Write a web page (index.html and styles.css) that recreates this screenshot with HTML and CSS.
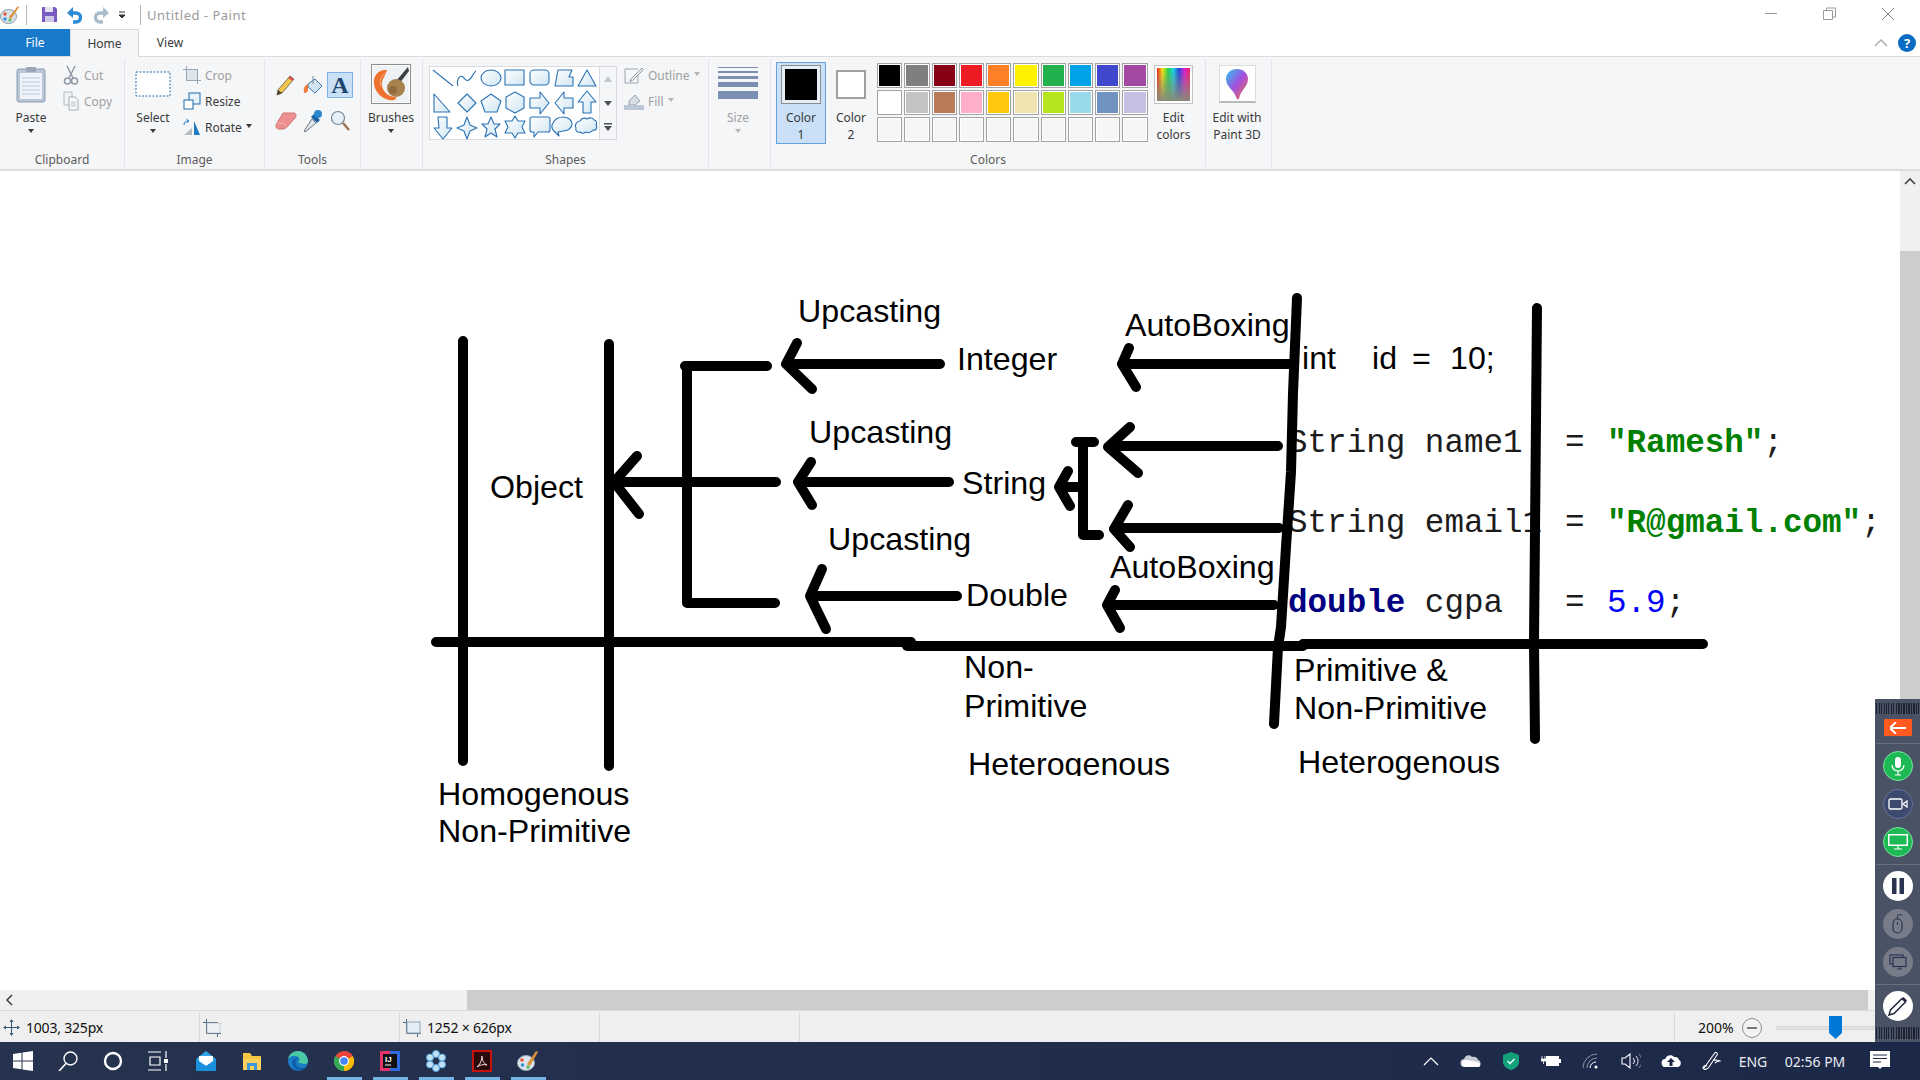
FILE: index.html
```html
<!DOCTYPE html>
<html lang="en">
<head>
    <meta charset="UTF-8">
    <title>Untitled - Paint</title>
    <link rel="stylesheet" href="styles.css">
</head>
<body>
    <!-- title bar -->
    <div class="titlebar">
        <svg class="qa app-icon" width="20" height="20" viewBox="0 0 20 20"><ellipse cx="8.5" cy="11.5" rx="8" ry="7" fill="#d8e3ea" stroke="#8499a8"/><circle cx="5" cy="9" r="1.7" fill="#e8503a"/><circle cx="5" cy="14" r="1.7" fill="#3f8ed8"/><circle cx="10" cy="15" r="1.6" fill="#5cb85c"/><path d="M9 12L18 1l1 1-8 12z" fill="#d9913a"/></svg>
        <span class="qa-sep first"></span>
        <svg class="qa save" width="17" height="17" viewBox="0 0 17 17"><path d="M1 1h13l2 2v13H1z" fill="#7a5cc0"/><path d="M4 1h8v5H4z" fill="#e6e2f2"/><path d="M4 10h9v6H4z" fill="#cfc8e6"/></svg>
        <svg class="qa undo" width="17" height="18" viewBox="0 0 17 18"><path d="M3 7h7a4 4 0 0 1 0 9H7" fill="none" stroke="#2a8ad4" stroke-width="3.4"/><path d="M7 1L1 7l6 5z" fill="#2a8ad4"/></svg>
        <svg class="qa redo" width="17" height="18" viewBox="0 0 17 18"><path d="M14 7H7a4 4 0 0 0 0 9h3" fill="none" stroke="#a9bccb" stroke-width="3.4"/><path d="M10 1l6 6-6 5z" fill="#a9bccb"/></svg>
        <svg class="qa drop" width="8" height="8" viewBox="0 0 8 8"><path d="M1 1h6M1 4h6L4 7z" stroke="#333" fill="#333"/></svg>
        <span class="qa-sep second"></span>
        <span class="doc-title">Untitled - Paint</span>
        <div class="win-controls">
            <svg width="58" height="29" viewBox="0 0 58 29"><path d="M22 13.500h12" stroke="#9a9a9a"/></svg>
            <svg width="58" height="29" viewBox="0 0 58 29"><path d="M22.500 10.500h9v9h-9zM25.500 10.500v-2.500h9v9h-3" fill="none" stroke="#9a9a9a"/></svg>
            <svg width="58" height="29" viewBox="0 0 58 29"><path d="M23 8l12 12M35 8L23 20" stroke="#8a8a8a"/></svg>
        </div>
    </div>

    <!-- tabs -->
    <div class="tabs">
        <div class="tab file-tab">File</div>
        <div class="tab home-tab">Home</div>
        <div class="tab view-tab">View</div>
        <div class="tab-right">
            <svg width="14" height="9" viewBox="0 0 14 9"><path d="M1 8l6-6 6 6" fill="none" stroke="#a8a8a8" stroke-width="1.300"/></svg>
            <span class="help">?</span>
        </div>
    </div>

    <!-- ribbon -->
    <div class="ribbon">
        <div class="group g-clipboard">
            <div class="group-body">
                <div class="big-btn paste">
                    <div class="big-icon">
                        <svg width="30" height="37" viewBox="0 0 30 37"><rect x="1" y="3" width="28" height="33" rx="2" fill="#b9c6d6" stroke="#8d9db0"/><rect x="4" y="7" width="22" height="26" fill="#f0f4fa"/><path d="M6 12h18M6 16h18M6 20h18M6 24h18M6 28h18" stroke="#b5c6dc"/><rect x="10" y="1" width="10" height="5" rx="1" fill="#98a6b7"/></svg>
                    </div>
                    <span class="big-label">Paste</span>
                    <i class="caret"></i>
                </div>
                <div class="small-col clip-col">
                    <div class="small-btn off">
                        <svg width="16" height="20" viewBox="0 0 16 20"><path d="M4 1l6 12M12 1L6 13" stroke="#8f9aa6" stroke-width="1.500"/><circle cx="4.500" cy="16" r="3" fill="none" stroke="#8f9aa6" stroke-width="1.500"/><circle cx="11.500" cy="16" r="3" fill="none" stroke="#8f9aa6" stroke-width="1.500"/></svg>
                        <span>Cut</span>
                    </div>
                    <div class="small-btn off">
                        <svg width="16" height="20" viewBox="0 0 16 20"><path d="M1 1h8v13H1z" fill="#f2f3f5" stroke="#b3bac2"/><path d="M6 6h6l3 3v10H6z" fill="#f7f8f9" stroke="#a6adb6"/><path d="M8 11h5M8 13h5M8 15h5" stroke="#bcc3cb"/></svg>
                        <span>Copy</span>
                    </div>
                </div>
            </div>
            <div class="group-label">Clipboard</div>
        </div>

        <div class="group g-image">
            <div class="group-body">
                <div class="big-btn select">
                    <div class="big-icon">
                        <svg width="36" height="26" viewBox="0 0 36 26"><rect x="1" y="1" width="34" height="24" fill="#fff" stroke="#2e6da8" stroke-dasharray="2 1.500"/></svg>
                    </div>
                    <span class="big-label">Select</span>
                    <i class="caret"></i>
                </div>
                <div class="small-col image-col">
                    <div class="small-btn off">
                        <svg width="18" height="18" viewBox="0 0 18 18"><path d="M3.500 0v14.500H18M0 3.500h14.500V18" fill="none" stroke="#9aa6b4"/><path d="M3.500 14.500l11-11" stroke="#9aa6b4"/><rect x="4" y="4" width="10" height="10" fill="#dfe5ec"/></svg>
                        <span>Crop</span>
                    </div>
                    <div class="small-btn">
                        <svg width="18" height="18" viewBox="0 0 18 18"><rect x="6" y="1" width="11" height="11" fill="#e8f2fa" stroke="#1f6aa8"/><rect x="1" y="8" width="9" height="9" fill="#fff" stroke="#1f6aa8"/></svg>
                        <span>Resize</span>
                    </div>
                    <div class="small-btn">
                        <svg width="18" height="18" viewBox="0 0 18 18"><path d="M1 17L9 10v7z" fill="#b9bdc2"/><path d="M11 3l6 14h-6z" fill="#1f78c1"/><path d="M1 7c0-3 2-4 4-4M3.500 1L6 3 3.500 5" fill="none" stroke="#1f78c1"/></svg>
                        <span>Rotate</span><i class="caret inline"></i>
                    </div>
                </div>
            </div>
            <div class="group-label">Image</div>
        </div>

        <div class="group g-tools">
            <div class="group-body">
                <div class="tool-grid">
                    <div class="tool"><svg width="20" height="22" viewBox="0 0 20 22"><path d="M14 2l4 3L6 19l-5 2 1-5z" fill="#f3c64c" stroke="#5c5340" stroke-width=".8"/><path d="M14 2l4 3-2 2-4-3z" fill="#d85a5a"/><path d="M1 21l1-5 4 3z" fill="#4a4238"/></svg></div>
                    <div class="tool"><svg width="22" height="22" viewBox="0 0 22 22"><path d="M6 10l7-5 7 7-7 7-7-6z" fill="#d3e4f3" stroke="#3f77ac"/><path d="M6 10c-3 1-5 4-4 9 2 0 4-1 4-3z" fill="#f07a3a"/><path d="M11 2v8" stroke="#7d8a96"/></svg></div>
                    <div class="tool active"><span class="tool-a">A</span></div>
                    <div class="tool"><svg width="22" height="18" viewBox="0 0 22 18"><path d="M8 1h11c2 0 3 3 1 5l-8 9c-2 2-3 2-5 2H4c-3 0-4-3-2-6z" fill="#ee8f8f" stroke="#cf7676"/><path d="M2 11l6 0 4 4" fill="none" stroke="#f6b5b5"/></svg></div>
                    <div class="tool"><svg width="22" height="24" viewBox="0 0 22 24"><path d="M10 10L2 22l1 1 11-9z" fill="#dfe7ee" stroke="#6b7680"/><path d="M9 8l6 6 3-3-6-6z" fill="#17609f"/><circle cx="16" cy="5" r="4" fill="#2a86cf"/></svg></div>
                    <div class="tool"><svg width="20" height="22" viewBox="0 0 20 22"><circle cx="8" cy="8" r="6.500" fill="#e6f1fa" stroke="#7a8794" stroke-width="1.200"/><path d="M13 13l6 7" stroke="#9a7350" stroke-width="2.400"/></svg></div>
                </div>
            </div>
            <div class="group-label">Tools</div>
        </div>

        <div class="group g-brushes">
            <div class="group-body">
                <div class="big-btn brushes">
                    <div class="big-icon">
                        <svg width="40" height="40" viewBox="0 0 40 40"><rect x=".5" y=".5" width="39" height="39" fill="#fff" stroke="#8d8d8d"/><rect x="2" y="2" width="36" height="36" fill="#eef2f4"/><path d="M37 3L25 17l3 3L38 7z" fill="#3c3f44"/><path d="M16 6C8 5 2 11 3 20c1 8 7 14 15 16 5 1 8-1 7-3-5 0-10-2-13-8-2-5-1-9 1-12 1-2 2-4 3-7z" fill="#f0712b"/><path d="M14 9c-4 3-6 8-4 13" fill="none" stroke="#f9b48a"/><circle cx="25" cy="24" r="9" fill="#a8814f"/><circle cx="22" cy="26" r="4" fill="#8f6a3c"/></svg>
                    </div>
                    <span class="big-label">Brushes</span>
                    <i class="caret"></i>
                </div>
            </div>
        </div>

        <div class="group g-shapes">
            <div class="group-body">
                <div class="gallery">
                    <svg width="170" height="73" viewBox="0 0 170 73">
                        <defs><linearGradient id="sg" x1="0" y1="0" x2="1" y2="1"><stop offset="0" stop-color="#ffffff"/><stop offset="1" stop-color="#cfe5f2"/></linearGradient></defs>
                        <g fill="url(#sg)" stroke="#2a72b5" stroke-width="1.100" stroke-linejoin="round">
                            <path d="M3 3l20 16" fill="none"/>
                            <path d="M28 19c-2-6 2-12 5-9s4 5 7 2 4-7 6-8" fill="none"/>
                            <ellipse cx="61" cy="11" rx="10" ry="8"/>
                            <rect x="75" y="3" width="19" height="15"/>
                            <rect x="100" y="3" width="19" height="15" rx="4"/>
                            <path d="M128 3h14l-3 7h4l0 9h-18z"/>
                            <path d="M157 3l9 16h-18z"/>
                            <path d="M4 27l16 18H4z"/>
                            <path d="M37 27l9 9-9 9-9-9z"/>
                            <path d="M61 27l10 7-4 11H55l-4-11z"/>
                            <path d="M85 25l9 5v11l-9 5-9-5V30z"/>
                            <path d="M100 31h10v-6l9 11-9 11v-6h-10z"/>
                            <path d="M143 31h-9v-6l-9 11 9 11v-6h9z"/>
                            <path d="M157 24l9 11h-5v11h-8V35h-5z"/>
                            <path d="M8 50h9v11h5l-9 11-9-11h5z"/>
                            <path d="M37 50l3 8 7 3-7 3-3 8-3-8-7-3 7-3z"/>
                            <path d="M61 50l3 7h6l-5 5 2 8-6-4-6 4 2-8-5-5h6z"/>
                            <path d="M85 49l3 5h7l-3 6 3 6h-7l-3 5-3-5h-7l3-6-3-6h7z"/>
                            <path d="M102 50h16a2 2 0 0 1 2 2v11a2 2 0 0 1-2 2h-10l-4 5v-5h-2a2 2 0 0 1-2-2V52a2 2 0 0 1 2-2z"/>
                            <path d="M133 50c5 0 9 3 9 7s-4 7-9 7l-5 1 1 4-5-5c-2-2-3-5-1-8 2-4 6-6 10-6z"/>
                            <path d="M150 54c2-4 6-3 7-2 3-2 6-1 7 1 3 0 3 4 2 5 2 2 0 6-3 5-2 3-5 3-7 2-3 2-5 1-6 0-3 1-5-2-4-4-2-3 1-7 4-7z"/>
                        </g>
                    </svg>
                </div>
                <div class="gallery-scroll">
                    <div class="gs-btn"><svg width="8" height="6" viewBox="0 0 8 6"><path d="M4 0l4 6H0z" fill="#c2c6cb"/></svg></div>
                    <div class="gs-btn"><svg width="8" height="5" viewBox="0 0 8 5"><path d="M0 0h8L4 5z" fill="#4f5359"/></svg></div>
                    <div class="gs-btn"><svg width="8" height="8" viewBox="0 0 8 8"><path d="M0 0h8v1.500H0zM0 3h8L4 8z" fill="#4f5359"/></svg></div>
                </div>
                <div class="small-col outline-col">
                    <div class="small-btn off">
                        <svg width="20" height="18" viewBox="0 0 20 18"><path d="M1 3h13M1 3v14h13V8" fill="none" stroke="#9aa6b4"/><path d="M7 13l11-11 1.500 1.500-11 11-2.500 1z" fill="#eef1f4" stroke="#8f98a3"/></svg>
                        <span>Outline</span><i class="caret inline light"></i>
                    </div>
                    <div class="small-btn off">
                        <svg width="20" height="18" viewBox="0 0 20 18"><path d="M5 9l6-6 5 6-5 4H5z" fill="#d7dde4" stroke="#98a2ae"/><rect x="0" y="13" width="20" height="5" fill="#bcc7d6"/></svg>
                        <span>Fill</span><i class="caret inline light"></i>
                    </div>
                </div>
            </div>
            <div class="group-label">Shapes</div>
        </div>

        <div class="group g-size">
            <div class="group-body">
                <div class="big-btn size">
                    <div class="big-icon size-icon">
                        <i class="size-line s1"></i><i class="size-line s2"></i><i class="size-line s3"></i><i class="size-line s4"></i><i class="size-line s5"></i>
                    </div>
                    <span class="big-label off-text">Size</span>
                    <i class="caret light"></i>
                </div>
            </div>
        </div>

        <div class="group g-colors">
            <div class="group-body">
                <div class="color-btn active">
                    <div class="swatch-big"><i></i></div>
                    <span class="big-label">Color<br>1</span>
                </div>
                <div class="color-btn">
                    <div class="swatch-small"></div>
                    <span class="big-label">Color<br>2</span>
                </div>
                <div class="palette">
                    <i class="cell c1"></i><i class="cell c2"></i><i class="cell c3"></i><i class="cell c4"></i><i class="cell c5"></i><i class="cell c6"></i><i class="cell c7"></i><i class="cell c8"></i><i class="cell c9"></i><i class="cell c10"></i>
                    <i class="cell c11"></i><i class="cell c12"></i><i class="cell c13"></i><i class="cell c14"></i><i class="cell c15"></i><i class="cell c16"></i><i class="cell c17"></i><i class="cell c18"></i><i class="cell c19"></i><i class="cell c20"></i>
                    <i class="cell"></i><i class="cell"></i><i class="cell"></i><i class="cell"></i><i class="cell"></i><i class="cell"></i><i class="cell"></i><i class="cell"></i><i class="cell"></i><i class="cell"></i>
                </div>
                <div class="big-btn edit-colors">
                    <div class="big-icon"><i class="rainbow"></i></div>
                    <span class="big-label">Edit<br>colors</span>
                </div>
            </div>
            <div class="group-label">Colors</div>
        </div>

        <div class="group g-paint3d">
            <div class="group-body">
                <div class="big-btn paint3d">
                    <div class="big-icon">
                        <div class="p3d-box">
                            <svg width="24" height="32" viewBox="0 0 24 32"><defs><linearGradient id="p3" x1="0" y1="0" x2="1" y2="1"><stop offset="0" stop-color="#27c8ee"/><stop offset=".5" stop-color="#a44fe0"/><stop offset="1" stop-color="#f0703a"/></linearGradient></defs><path d="M12 1c7 0 11 5 11 10 0 8-7 10-9 20-2 1-2 0-3-2C9 22 1 19 1 11 1 5 6 1 12 1z" fill="url(#p3)"/></svg>
                        </div>
                    </div>
                    <span class="big-label">Edit with<br>Paint 3D</span>
                </div>
            </div>
        </div>
    </div>

    <!-- canvas -->
    <div class="workspace">
        <div class="canvas">
            <svg class="drawing" width="1900" height="820" viewBox="0 170 1900 820">
                <g class="code">
                    <text x="1288" y="452">String name1</text>
                    <text x="1288" y="532">String email1</text>
                    <text x="1288" y="612"><tspan class="kw">double</tspan> cgpa</text>
                    <text x="1565" y="452">=</text>
                    <text x="1565" y="532">=</text>
                    <text x="1565" y="612">=</text>
                    <text class="str" x="1607" y="452">"Ramesh"<tspan class="plain">;</tspan></text>
                    <text class="str" x="1607" y="532">"R@gmail.com"<tspan class="plain">;</tspan></text>
                    <text class="num" x="1607" y="612">5.9<tspan class="plain">;</tspan></text>
                </g>
                <g class="ink">
                    <path d="M463 341V761M609 344V766" stroke-width="9"/>
                    <path d="M1297 298L1293 393 1291 472 1286 547 1281 627 1278 647 1274 724M1537 308L1534 643 1535 739" stroke-width="9"/>
                    <path d="M436 642H911M907 646H1303M1303 644H1703"/>
                    <path d="M767 366H685M687 366V603H775"/>
                    <path d="M940 364H790M797 343L786 364 812 389"/>
                    <path d="M776 482H617M637 456L614 482 639 514"/>
                    <path d="M949 482H800M811 462L798 482 812 505"/>
                    <path d="M957 596H815M822 569L810 596 826 629"/>
                    <path d="M1294 364H1127M1129 348L1122 364 1136 387"/>
                    <path d="M1278 446H1112M1130 427L1108 447 1138 473"/>
                    <path d="M1279 528H1118M1128 505L1114 529 1130 547"/>
                    <path d="M1274 605H1112M1115 590L1107 605 1120 628"/>
                    <path d="M1076 442H1094M1083 442V535H1099"/>
                    <path d="M1082 487H1064M1068 471L1059 487 1070 506"/>
                </g>
                <g class="label">
                    <text x="798" y="322">Upcasting</text>
                    <text x="809" y="443">Upcasting</text>
                    <text x="828" y="550">Upcasting</text>
                    <text x="957" y="370">Integer</text>
                    <text x="962" y="494">String</text>
                    <text x="966" y="606">Double</text>
                    <text x="490" y="498">Object</text>
                    <text x="1125" y="336">AutoBoxing</text>
                    <text x="1110" y="578">AutoBoxing</text>
                    <text x="964" y="678">Non-</text>
                    <text x="964" y="717">Primitive</text>
                    <text x="968" y="775">Heterogenous</text>
                    <text x="1298" y="773">Heterogenous</text>
                    <text x="1294" y="681">Primitive &amp;</text>
                    <text x="1294" y="719">Non-Primitive</text>
                    <text x="438" y="805">Homogenous</text>
                    <text x="438" y="842">Non-Primitive</text>
                    <text y="369"><tspan x="1302">int</tspan><tspan x="1372">id</tspan><tspan x="1412">=</tspan><tspan x="1450">10;</tspan></text>
                </g>
                <!-- text box edge cuts the descender -->
                <rect class="clip-strip" x="960" y="776" width="220" height="14"/>
            </svg>
        </div>
        <div class="vscroll">
            <svg width="20" height="20" viewBox="0 0 20 20"><path d="M5 13l5-5 5 5" fill="none" stroke="#444" stroke-width="1.600"/></svg>
            <div class="vthumb"></div>
        </div>
    </div>

    <div class="hscroll">
        <svg width="20" height="20" viewBox="0 0 20 20"><path d="M12 5l-5 5 5 5" fill="none" stroke="#444" stroke-width="1.600"/></svg>
        <div class="hthumb"></div>
    </div>

    <!-- status bar -->
    <div class="statusbar">
        <div class="st st-pos">
            <svg width="17" height="17" viewBox="0 0 17 17"><path d="M8.500 1v15M1 8.500h15" stroke="#3b5a78"/><path d="M8.500 0l2 3h-4zM8.500 17l2-3h-4zM0 8.500l3-2v4zM17 8.500l-3-2v4z" fill="#3b5a78"/></svg>
            <span>1003, 325px</span>
        </div>
        <div class="st st-sel">
            <svg width="18" height="18" viewBox="0 0 18 18"><path d="M3.500 0v14.500H18M0 3.500h14.500V18" fill="none" stroke="#4d6a85"/><rect x="4" y="4" width="13" height="10" fill="#eef1f4" stroke="#aab4be" stroke-dasharray="1.500 1"/></svg>
        </div>
        <div class="st st-size">
            <svg width="18" height="18" viewBox="0 0 18 18"><path d="M3.500 0v14.500H18M0 3.500h14.500V18" fill="none" stroke="#4d6a85"/><rect x="4" y="3" width="13" height="11" fill="#e3edf5" stroke="#8fa3b5"/></svg>
            <span>1252 × 626px</span>
        </div>
        <div class="st"></div>
        <div class="st st-blank"></div>
        <div class="st st-zoom">
            <span>200%</span>
            <span class="zoom-minus"><i></i></span>
            <div class="zoom-track"><svg class="zoom-thumb" width="13" height="23" viewBox="0 0 13 23"><path d="M0 0h13v17l-6.500 6L0 17z" fill="#0078d7"/></svg></div>
        </div>
    </div>

    <!-- taskbar -->
    <div class="taskbar">
        <div class="tb-item sys"><svg width="20" height="20" viewBox="0 0 20 20"><path d="M0 3l8.500-1.200v7.700H0zM9.500 1.600L20 0v9.500H9.500zM0 10.500h8.500v7.700L0 17zM9.500 10.500H20V20L9.500 18.400z" fill="#fff"/></svg></div>
        <div class="tb-item sys"><svg width="20" height="20" viewBox="0 0 20 20"><circle cx="12.500" cy="7.500" r="6.500" fill="none" stroke="#fff" stroke-width="1.400"/><path d="M8 12.500L1 20" stroke="#fff" stroke-width="1.600"/></svg></div>
        <div class="tb-item sys"><svg width="20" height="20" viewBox="0 0 20 20"><circle cx="10" cy="10" r="8" fill="none" stroke="#fff" stroke-width="2.400"/></svg></div>
        <div class="tb-item sys"><svg width="20" height="20" viewBox="0 0 20 20"><path d="M0 1h13M0 19h13M2 6h10v8H2z" fill="none" stroke="#fff" stroke-width="1.200"/><path d="M18 0v7M18 13v7" stroke="#fff" stroke-width="1.200"/><rect x="16" y="8" width="4" height="4" fill="#fff"/></svg></div>
        <div class="tb-item app first-app"><svg width="22" height="22" viewBox="0 0 22 22"><path d="M11 1l10 8v12H1V9z" fill="#2fa4e7"/><path d="M4 6h14v6l-7 4-7-4z" fill="#fff"/><path d="M1 9l10 7 10-7v12H1z" fill="#1b8fdc"/></svg></div>
        <div class="tb-item app"><svg width="20" height="20" viewBox="0 0 20 20"><path d="M1 2h7l2 3h9v14H1z" fill="#f6c544"/><rect x="1" y="8" width="18" height="11" fill="#f9d25f"/><rect x="5" y="12" width="10" height="7" fill="#3a96dd"/><rect x="8" y="15" width="4" height="4" fill="#f9d25f"/></svg></div>
        <div class="tb-item app"><svg width="22" height="22" viewBox="0 0 22 22"><circle cx="11" cy="11" r="10" fill="#1a7ec7"/><path d="M21 12c0-6-4-11-10-11C6 1 2 4 1 9c3-4 9-4 11-1 1 2 0 3-1 4 2 2 10 3 10 0z" fill="#4cc9a4"/><path d="M5 12c0 5 4 9 9 8 2 0 4-1 5-3-4 2-9 1-10-3-1-2 0-5 3-6-4 0-7 1-7 4z" fill="#0f5fa8"/></svg></div>
        <div class="tb-item app"><svg width="22" height="22" viewBox="0 0 22 22"><circle cx="11" cy="11" r="10" fill="#e8453c"/><path d="M11 11L2.300 6A10 10 0 0 0 11 21z" fill="#35a853"/><path d="M11 11l8.700-5A10 10 0 0 1 11 21z" fill="#fbbc05"/><path d="M11 1a10 10 0 0 1 8.700 5H11z" fill="#e8453c"/><circle cx="11" cy="11" r="5" fill="#fff"/><circle cx="11" cy="11" r="3.800" fill="#4285f4"/></svg></div>
        <div class="tb-item app"><svg width="20" height="20" viewBox="0 0 20 20"><rect width="20" height="20" fill="#e8336a"/><rect x="10" width="10" height="20" fill="#2f6be0"/><rect x="3" y="3" width="14" height="14" fill="#111"/><text class="ij" x="5" y="11">IJ</text><path d="M5 14h6" stroke="#fff"/></svg></div>
        <div class="tb-item app"><svg width="22" height="22" viewBox="0 0 22 22"><g fill="#bfe0f5" stroke="#5aa6dc"><circle cx="11" cy="4" r="3.500"/><circle cx="11" cy="18" r="3.500"/><circle cx="5" cy="7.500" r="3.500"/><circle cx="17" cy="7.500" r="3.500"/><circle cx="5" cy="14.500" r="3.500"/><circle cx="17" cy="14.500" r="3.500"/></g></svg></div>
        <div class="tb-item app"><svg width="20" height="22" viewBox="0 0 20 22"><rect x="1" y="1" width="18" height="20" fill="#2a0a0a" stroke="#c8130d" stroke-width="2"/><path d="M5 17c3-2 5-7 5-11 0 4 2 8 5 9-4-1-7 0-10 2z" fill="none" stroke="#f3dcdc"/></svg></div>
        <div class="tb-item app"><svg width="22" height="22" viewBox="0 0 22 22"><ellipse cx="9" cy="13" rx="8.500" ry="7.500" fill="#dbe6ee" stroke="#93a7b6"/><circle cx="5" cy="10" r="1.800" fill="#e8503a"/><circle cx="5.500" cy="15" r="1.800" fill="#3f8ed8"/><circle cx="11" cy="17" r="1.700" fill="#5cb85c"/><path d="M10 14L19 1l2 1-8 14z" fill="#d9913a"/></svg></div>
        <i class="running r1"></i><i class="running r2"></i><i class="running r3"></i><i class="running r4"></i><i class="running r5"></i>

        <div class="tray">
            <div class="tray-item t-caret"><svg width="16" height="9" viewBox="0 0 16 9"><path d="M1 8l7-7 7 7" fill="none" stroke="#fff" stroke-width="1.200"/></svg></div>
            <div class="tray-item t-cloud"><svg width="22" height="14" viewBox="0 0 22 14"><path d="M5 13a4 4 0 0 1-1-8C5 1 10 0 12 3c3-1 6 1 6 3 3 0 4 7 0 7z" fill="#c5cad3"/><path d="M5 13a3.500 3.500 0 0 1 1-7c3 0 4 1 6 1s8 1 8 3 0 3-2 3z" fill="#fff"/></svg></div>
            <div class="tray-item t-shield"><svg width="16" height="18" viewBox="0 0 16 18"><path d="M8 0l8 3v7c0 4-4 7-8 8-4-1-8-4-8-8V3z" fill="#13a17c"/><path d="M4.500 9l2.500 2.500 4.500-4.500" fill="none" stroke="#fff" stroke-width="1.300"/></svg></div>
            <div class="tray-item t-batt"><svg width="20" height="14" viewBox="0 0 20 14"><path d="M1 2v3M4 2v3M0 5h5v2H0zM2.500 7v3" stroke="#fff" fill="#fff" stroke-width=".8"/><rect x="5.500" y="2.500" width="12" height="9" fill="#fff" stroke="#fff"/><rect x="18" y="5" width="2" height="4" fill="#fff"/></svg></div>
            <div class="tray-item t-wifi"><svg width="18" height="16" viewBox="0 0 18 16"><path d="M1 15A14 14 0 0 1 15 1M5 15A10 10 0 0 1 15 5" fill="none" stroke="#8a93a6"/><path d="M8 15a6 6 0 0 1 6-6" fill="none" stroke="#fff"/><circle cx="14" cy="14" r="1.500" fill="#fff"/></svg></div>
            <div class="tray-item t-vol"><svg width="20" height="16" viewBox="0 0 20 16"><path d="M1 5h3l5-4v14l-5-4H1z" fill="none" stroke="#fff" stroke-width="1.100"/><path d="M12 5a4 4 0 0 1 0 6" fill="none" stroke="#fff"/><path d="M15 3a7 7 0 0 1 0 10" fill="none" stroke="#dfe3ea"/><path d="M18 1a10 10 0 0 1 0 14" fill="none" stroke="#7d879b"/></svg></div>
            <div class="tray-item t-up"><svg width="20" height="14" viewBox="0 0 20 14"><path d="M5 13a4 4 0 0 1-.8-8C5 1 11 0 13 3c3-.5 5 1 5 3 3 1 2 7-1 7z" fill="#fff"/><path d="M10 4l4 4h-2.500v4h-3V8H6z" fill="#1f2a48"/></svg></div>
            <div class="tray-item t-pen"><svg width="20" height="20" viewBox="0 0 20 20"><path d="M3 17L13 3c2-3 4-1 3 1L8 16c-2 3-5 3-6 1 0-2 2-3 4-2M12 9c3 0 6 0 7 1-2 0-4 1-5 2" fill="none" stroke="#fff" stroke-width="1.100"/></svg></div>
            <div class="tray-text t-lang">ENG</div>
            <div class="tray-text t-clock">02:56 PM</div>
            <div class="tray-item t-note"><svg width="20" height="20" viewBox="0 0 20 20"><path d="M0 0h20v16h-8l-2 2-2-2H0z" fill="#fff"/><path d="M3 4h14M3 7.500h14M3 11h8" stroke="#1f2a48"/></svg></div>
        </div>
    </div>

    <!-- screen recorder panel -->
    <div class="recorder">
        <div class="grip"></div>
        <div class="rec-back"><svg width="16" height="12" viewBox="0 0 16 12"><path d="M6 0L0 6l6 6M1 6h15" fill="none" stroke="#fff" stroke-width="2"/></svg></div>
        <hr class="rec-sep">
        <div class="rec-list">
            <span class="rec-btn green"><svg width="14" height="19" viewBox="0 0 14 19"><rect x="4" y="0" width="6" height="11" rx="3" fill="#fff"/><path d="M1 8a6 6 0 0 0 12 0M7 14v4M4 18h6" fill="none" stroke="#fff" stroke-width="1.200"/></svg></span>
            <span class="rec-btn blue"><svg width="20" height="12" viewBox="0 0 20 12"><rect x="1" y="1" width="13" height="10" rx="1.500" fill="none" stroke="#fff" stroke-width="1.300"/><path d="M15 6l4-3v6z" fill="none" stroke="#fff" stroke-width="1.200"/></svg></span>
            <span class="rec-btn green"><svg width="20" height="16" viewBox="0 0 20 16"><rect x="0" y="0" width="20" height="12" fill="#fff"/><rect x="1.500" y="1.500" width="17" height="9" fill="#1db954"/><path d="M6 15h8M10 12v3" stroke="#fff" stroke-width="1.200"/></svg></span>
        </div>
        <hr class="rec-sep tight">
        <div class="rec-list">
            <span class="rec-btn white"><svg width="12" height="16" viewBox="0 0 12 16"><path d="M0 0h4.500v16H0zM7.500 0H12v16H7.500z" fill="#2a3350"/></svg></span>
            <span class="rec-btn grey"><svg width="16" height="20" viewBox="0 0 16 20"><rect x="3" y="5" width="9" height="14" rx="4.500" fill="none" stroke="#2a3350" stroke-width="1.200"/><path d="M7.500 5V2c0-1 2-2 5-1M7.500 8v3" fill="none" stroke="#2a3350"/></svg></span>
            <span class="rec-btn grey"><svg width="18" height="16" viewBox="0 0 18 16"><rect x="1" y="1" width="13" height="9" fill="none" stroke="#2a3350" stroke-width="1.200"/><rect x="4" y="3.500" width="13" height="9" fill="#777c88" stroke="#2a3350" stroke-width="1.200"/><path d="M8 15h5M10.500 12.500V15" stroke="#2a3350"/></svg></span>
        </div>
        <hr class="rec-sep tight">
        <span class="rec-btn white pen"><svg width="20" height="20" viewBox="0 0 20 20"><path d="M1 19l1.500-5L14 2.500l3.500 3.500L6 17.500z" fill="none" stroke="#1f2638" stroke-width="1.500"/><path d="M14 2.500l1.500-1.500 3.500 3.500L17.500 6z" fill="#1f2638"/></svg></span>
        <div class="grip bottom"></div>
    </div>
</body>
</html>
```
FILE: styles.css
```css
* {
    box-sizing: border-box;
}
body {
    display: flex;
    flex-direction: column;
    height: 100vh;
    margin: 0;
    overflow: hidden;
    background-color: #fff;
    font-family: "Noto Sans", "Open Sans", sans-serif;
    font-size: 12px;
    color: #3a3a3a;
}

/* title bar */
.titlebar {
    display: flex;
    align-items: center;
    height: 29px;
    flex: none;
    background-color: #fff;
}
.qa {
    flex: none;
}
.app-icon {
    margin-left: 0;
}
.qa-sep {
    width: 1px;
    height: 20px;
    background-color: #b5b5b5;
}
.qa-sep.first {
    margin-left: 6px;
}
.save {
    margin-left: 14px;
}
.undo {
    margin-left: 8px;
}
.redo {
    margin-left: 10px;
}
.drop {
    margin-left: 8px;
}
.qa-sep.second {
    margin-left: 14px;
}
.doc-title {
    margin-left: 6px;
    font-size: 13px;
    color: #9b9b9b;
    letter-spacing: 0.5px;
}
.win-controls {
    display: flex;
    margin-left: auto;
    margin-right: 3px;
}

/* tabs */
.tabs {
    display: flex;
    height: 28px;
    flex: none;
    background-color: #fff;
    border-bottom: 1px solid #dadbdc;
}
.tab {
    display: flex;
    align-items: center;
    justify-content: center;
    width: 69px;
}
.file-tab {
    width: 70px;
    background-color: #1979ca;
    color: #fff;
}
.home-tab {
    height: 28px;
    background-color: #f5f6f7;
    border: 1px solid #dadbdc;
    border-top: 1px solid #dadbdc;
    border-bottom: none;
}
.view-tab {
    width: 62px;
}
.tab-right {
    display: flex;
    align-items: center;
    gap: 10px;
    margin-left: auto;
    margin-right: 4px;
}
.help {
    display: flex;
    align-items: center;
    justify-content: center;
    width: 18px;
    height: 18px;
    border-radius: 50%;
    background-color: #0b6cc4;
    color: #fff;
    font-weight: 700;
    font-size: 13px;
}

/* ribbon */
.ribbon {
    display: flex;
    height: 114px;
    flex: none;
    padding-top: 2px;
    background-color: #f5f6f7;
    border-bottom: 2px solid #dcddde;
}
.group {
    display: flex;
    flex-direction: column;
    flex: none;
    height: 108px;
    border-right: 1px solid #e2e4e7;
}
.group-body {
    display: flex;
    flex: 1;
    min-height: 0;
}
.group-label {
    height: 15px;
    line-height: 15px;
    text-align: center;
    color: #5c5c5c;
}
.g-clipboard { width: 125px; }
.g-image { width: 140px; }
.g-tools { width: 96px; }
.g-brushes { width: 62px; }
.g-shapes { width: 286px; }
.g-size { width: 62px; }
.g-colors { width: 435px; }
.g-paint3d { width: 66px; }

.big-btn {
    display: flex;
    flex-direction: column;
    align-items: center;
    flex: none;
}
.big-icon {
    display: flex;
    align-items: center;
    justify-content: center;
    height: 50px;
    flex: none;
}
.big-label {
    line-height: 17px;
    text-align: center;
}
.off-text {
    color: #a0a0a0;
}
.caret {
    display: block;
    width: 0;
    height: 0;
    margin-top: 3px;
    border-left: 3.5px solid transparent;
    border-right: 3.5px solid transparent;
    border-top: 4px solid #3a3a3a;
}
.caret.light {
    border-top-color: #b4b4b4;
}
.caret.inline {
    margin: 0 0 2px 0;
}
.paste {
    width: 52px;
    margin-left: 5px;
}
.select {
    width: 56px;
}
.brushes {
    width: 60px;
}
.size {
    width: 58px;
}
.small-col {
    display: flex;
    flex-direction: column;
    padding-top: 3px;
}
.small-btn {
    display: flex;
    align-items: center;
    gap: 5px;
    height: 26px;
}
.small-btn svg {
    flex: none;
}
.small-btn.off {
    color: #a0a0a0;
}
.clip-col {
    margin-left: 6px;
}
.image-col {
    margin-left: 2px;
}
.image-col .small-btn {
    gap: 4px;
}
.outline-col {
    margin-left: 7px;
}
.outline-col .small-btn {
    gap: 4px;
}

/* tools */
.tool-grid {
    display: grid;
    grid-template-columns: repeat(3, 27px);
    grid-template-rows: repeat(2, 36px);
    margin: 8px 0 0 7px;
}
.tool {
    display: flex;
    align-items: center;
    justify-content: center;
}
.tool.active {
    width: 26px;
    height: 26px;
    margin: 5px 0 0 1px;
    background-color: #c9e0f7;
    border: 1px solid #7db4ea;
}
.tool-a {
    font-family: "Liberation Serif", serif;
    font-size: 24px;
    font-weight: 700;
    line-height: 24px;
    color: #20456f;
}

/* shapes */
.gallery {
    width: 171px;
    height: 74px;
    margin: 7px 0 0 6px;
    background-color: #fff;
    border: 1px solid #d9dbde;
}
.gallery svg {
    display: block;
}
.gallery-scroll {
    display: flex;
    flex-direction: column;
    width: 17px;
    height: 74px;
    margin-top: 7px;
    border: 1px solid #d9dbde;
    border-left: none;
}
.gs-btn {
    display: flex;
    flex: 1;
    align-items: center;
    justify-content: center;
}

/* size */
.size-icon {
    flex-direction: column;
    justify-content: flex-start;
    padding-top: 8px;
}
.size-line {
    display: block;
    width: 40px;
    background-color: #7d8fb0;
}
.s1 { height: 1px; margin-bottom: 3px; }
.s2 { height: 2px; margin-bottom: 3px; }
.s3 { height: 3px; margin-bottom: 3px; }
.s4 { height: 5px; margin-bottom: 4px; }
.s5 { height: 8px; }

/* colors */
.color-btn {
    display: flex;
    flex-direction: column;
    align-items: center;
    flex: none;
    width: 50px;
    height: 82px;
    margin-top: 3px;
    padding-top: 2px;
    border: 1px solid transparent;
}
.color-btn.active {
    margin-left: 5px;
    background-color: #c9e0f7;
    border-color: #64a2e2;
}
.swatch-big {
    width: 40px;
    height: 40px;
    padding: 3px;
    margin-bottom: 5px;
    background-color: #e6eef6;
    border: 1px solid #8c8c8c;
}
.swatch-big i {
    display: block;
    width: 100%;
    height: 100%;
    background-color: #000;
}
.swatch-small {
    width: 30px;
    height: 30px;
    margin: 5px 0 10px;
    background-color: #fff;
    border: 2px solid #a0a0a0;
}
.palette {
    display: grid;
    grid-template-columns: repeat(10, 25.25px);
    grid-auto-rows: 25px;
    gap: 2px;
    margin: 4px 0 0 1px;
}
.cell {
    display: block;
    border: 1px solid #a3a3a3;
    box-shadow: inset 0 0 0 1px #fff;
}
.c1 { background-color: #000000; }
.c2 { background-color: #7f7f7f; }
.c3 { background-color: #880015; }
.c4 { background-color: #ed1c24; }
.c5 { background-color: #ff7f27; }
.c6 { background-color: #fff200; }
.c7 { background-color: #22b14c; }
.c8 { background-color: #00a2e8; }
.c9 { background-color: #3f48cc; }
.c10 { background-color: #a349a4; }
.c11 { background-color: #ffffff; }
.c12 { background-color: #c3c3c3; }
.c13 { background-color: #b97a57; }
.c14 { background-color: #ffaec9; }
.c15 { background-color: #ffc90e; }
.c16 { background-color: #efe4b0; }
.c17 { background-color: #b5e61d; }
.c18 { background-color: #99d9ea; }
.c19 { background-color: #7092be; }
.c20 { background-color: #c8bfe7; }
.edit-colors {
    width: 50px;
    margin-left: 1px;
}
.rainbow {
    display: block;
    width: 37px;
    height: 37px;
    border: 2px solid #fff;
    outline: 1px solid #c4c4c4;
    background: linear-gradient(to bottom, rgba(128, 128, 128, 0) 0%, #8a8a7a 100%),
        linear-gradient(to right, #f01b1b, #f5e60f, #24d64a, #17d5e6, #2340e0, #e01bd6, #f0205a);
}
.paint3d {
    width: 62px;
}
.p3d-box {
    display: flex;
    align-items: center;
    justify-content: center;
    width: 37px;
    height: 38px;
    background-color: #fff;
    border: 1px solid #dcdcdc;
    border-bottom: 2px solid #b9b9b9;
}

/* canvas */
.workspace {
    display: flex;
    flex: 1;
    min-height: 0;
    background-color: #fff;
}
.canvas {
    flex: 1;
    overflow: hidden;
    background-color: #fff;
}
.drawing {
    display: block;
    margin-top: -1px;
}
.ink path {
    fill: none;
    stroke: #000;
    stroke-width: 10;
    stroke-linecap: round;
    stroke-linejoin: round;
}
.label text {
    font-family: "Liberation Sans", Arial, sans-serif;
    font-size: 32.2px;
    fill: #000;
}
.clip-strip {
    fill: #fff;
}
.code text {
    font-family: "Liberation Mono", "Courier New", monospace;
    font-size: 32.6px;
    fill: #1c1c1c;
}
.code .kw {
    font-weight: 700;
    fill: #000080;
}
.code .str {
    font-weight: 700;
    fill: #008000;
}
.code .num {
    fill: #0000ff;
}
.code .plain {
    font-weight: 400;
    fill: #1c1c1c;
}
.vscroll {
    display: flex;
    flex-direction: column;
    flex: none;
    width: 20px;
    background-color: #f0f0f0;
}
.vthumb {
    flex: 1;
    margin-top: 60px;
    background-color: #cdcdcd;
}
.hscroll {
    display: flex;
    height: 20px;
    flex: none;
    background-color: #f0f0f0;
}
.hthumb {
    width: 1401px;
    margin-left: 447px;
    background-color: #cdcdcd;
}

/* status bar */
.statusbar {
    display: flex;
    height: 32px;
    flex: none;
    padding-top: 2px;
    background-color: #efefef;
    border-top: 1px solid #dcdcdc;
    font-size: 14px;
    color: #111;
}
.st {
    display: flex;
    align-items: center;
    gap: 6px;
    width: 200px;
    padding-left: 3px;
    border-right: 1px solid #d9d9d9;
}
.st-pos {
    letter-spacing: -0.2px;
}
.st-size {
    letter-spacing: -0.2px;
}
.st-blank {
    width: 875px;
}
.st-zoom {
    flex: 1;
    gap: 8px;
    padding-left: 23px;
    border-right: none;
}
.zoom-minus {
    display: flex;
    align-items: center;
    justify-content: center;
    flex: none;
    width: 20px;
    height: 20px;
    border-radius: 50%;
    background-color: #f2f2f2;
    border: 1px solid #8e8e8e;
}
.zoom-minus i {
    display: block;
    width: 10px;
    height: 2px;
    background-color: #777;
}
.zoom-track {
    display: flex;
    align-items: center;
    flex: 1;
    height: 4px;
    margin-left: 6px;
    background-color: #e3e3e3;
    border: 1px solid #d6d6d6;
}
.zoom-thumb {
    flex: none;
    margin-left: 52px;
}

/* taskbar */
.taskbar {
    display: flex;
    align-items: center;
    position: relative;
    height: 38px;
    flex: none;
    background: linear-gradient(to right, #26334f, #1c2848);
}
.tb-item {
    display: flex;
    align-items: center;
    justify-content: center;
    flex: none;
    width: 46px;
    height: 38px;
}
.tb-item.sys {
    width: 45px;
}
.first-app {
    margin-left: 3px;
}
.ij {
    font-family: "Liberation Sans", sans-serif;
    font-size: 8px;
    font-weight: 700;
    fill: #fff;
}
.running {
    position: absolute;
    bottom: 0;
    width: 35px;
    height: 3px;
    background-color: #76b2e4;
}
.r1 { left: 327px; }
.r2 { left: 373px; }
.r3 { left: 419px; }
.r4 { left: 465px; }
.r5 { left: 511px; }
.tray {
    display: flex;
    align-items: center;
    height: 38px;
    margin-left: auto;
}
.tray-item {
    display: flex;
    align-items: center;
    justify-content: center;
    flex: none;
    width: 40px;
    height: 38px;
}
.tray-text {
    flex: none;
    text-align: center;
    font-size: 14px;
    color: #e9ebf0;
}
.t-lang {
    width: 44px;
}
.t-clock {
    width: 80px;
}
.t-note {
    width: 45px;
    margin-left: 2px;
    margin-right: 18px;
}

/* recorder panel sits over the window */
.recorder {
    display: flex;
    flex-direction: column;
    align-items: center;
    position: absolute;
    top: 699px;
    right: 0;
    width: 45px;
    height: 343px;
    padding-top: 4px;
    background-color: #4a5265;
}
.grip {
    flex: none;
    width: 43px;
    height: 11px;
    background: repeating-linear-gradient(to right, #1d2230 0, #1d2230 1px, #4a5265 1px, #4a5265 2.500px);
}
.grip.bottom {
    height: 12px;
    margin-top: 6px;
}
.rec-back {
    display: flex;
    align-items: center;
    justify-content: center;
    flex: none;
    width: 28px;
    height: 17px;
    margin-top: 5px;
    background-color: #ff5a1f;
    border-radius: 1px;
}
.rec-sep {
    flex: none;
    width: 44px;
    height: 1px;
    margin: 7px 0 7px;
    border: none;
    background-color: #68707f;
}
.rec-sep.tight {
    margin-bottom: 6px;
}
.rec-list {
    display: flex;
    flex-direction: column;
    flex: none;
    gap: 8px;
}
.rec-btn {
    display: flex;
    align-items: center;
    justify-content: center;
    flex: none;
    width: 30px;
    height: 30px;
    border-radius: 50%;
}
.rec-btn.green {
    background-color: #1db954;
    border: 1px solid #7fe0a2;
}
.rec-btn.blue {
    background-color: #3d4a6e;
    border: 1px solid #66749a;
}
.rec-btn.white {
    background-color: #fff;
}
.rec-btn.grey {
    background-color: #777c88;
}
```
